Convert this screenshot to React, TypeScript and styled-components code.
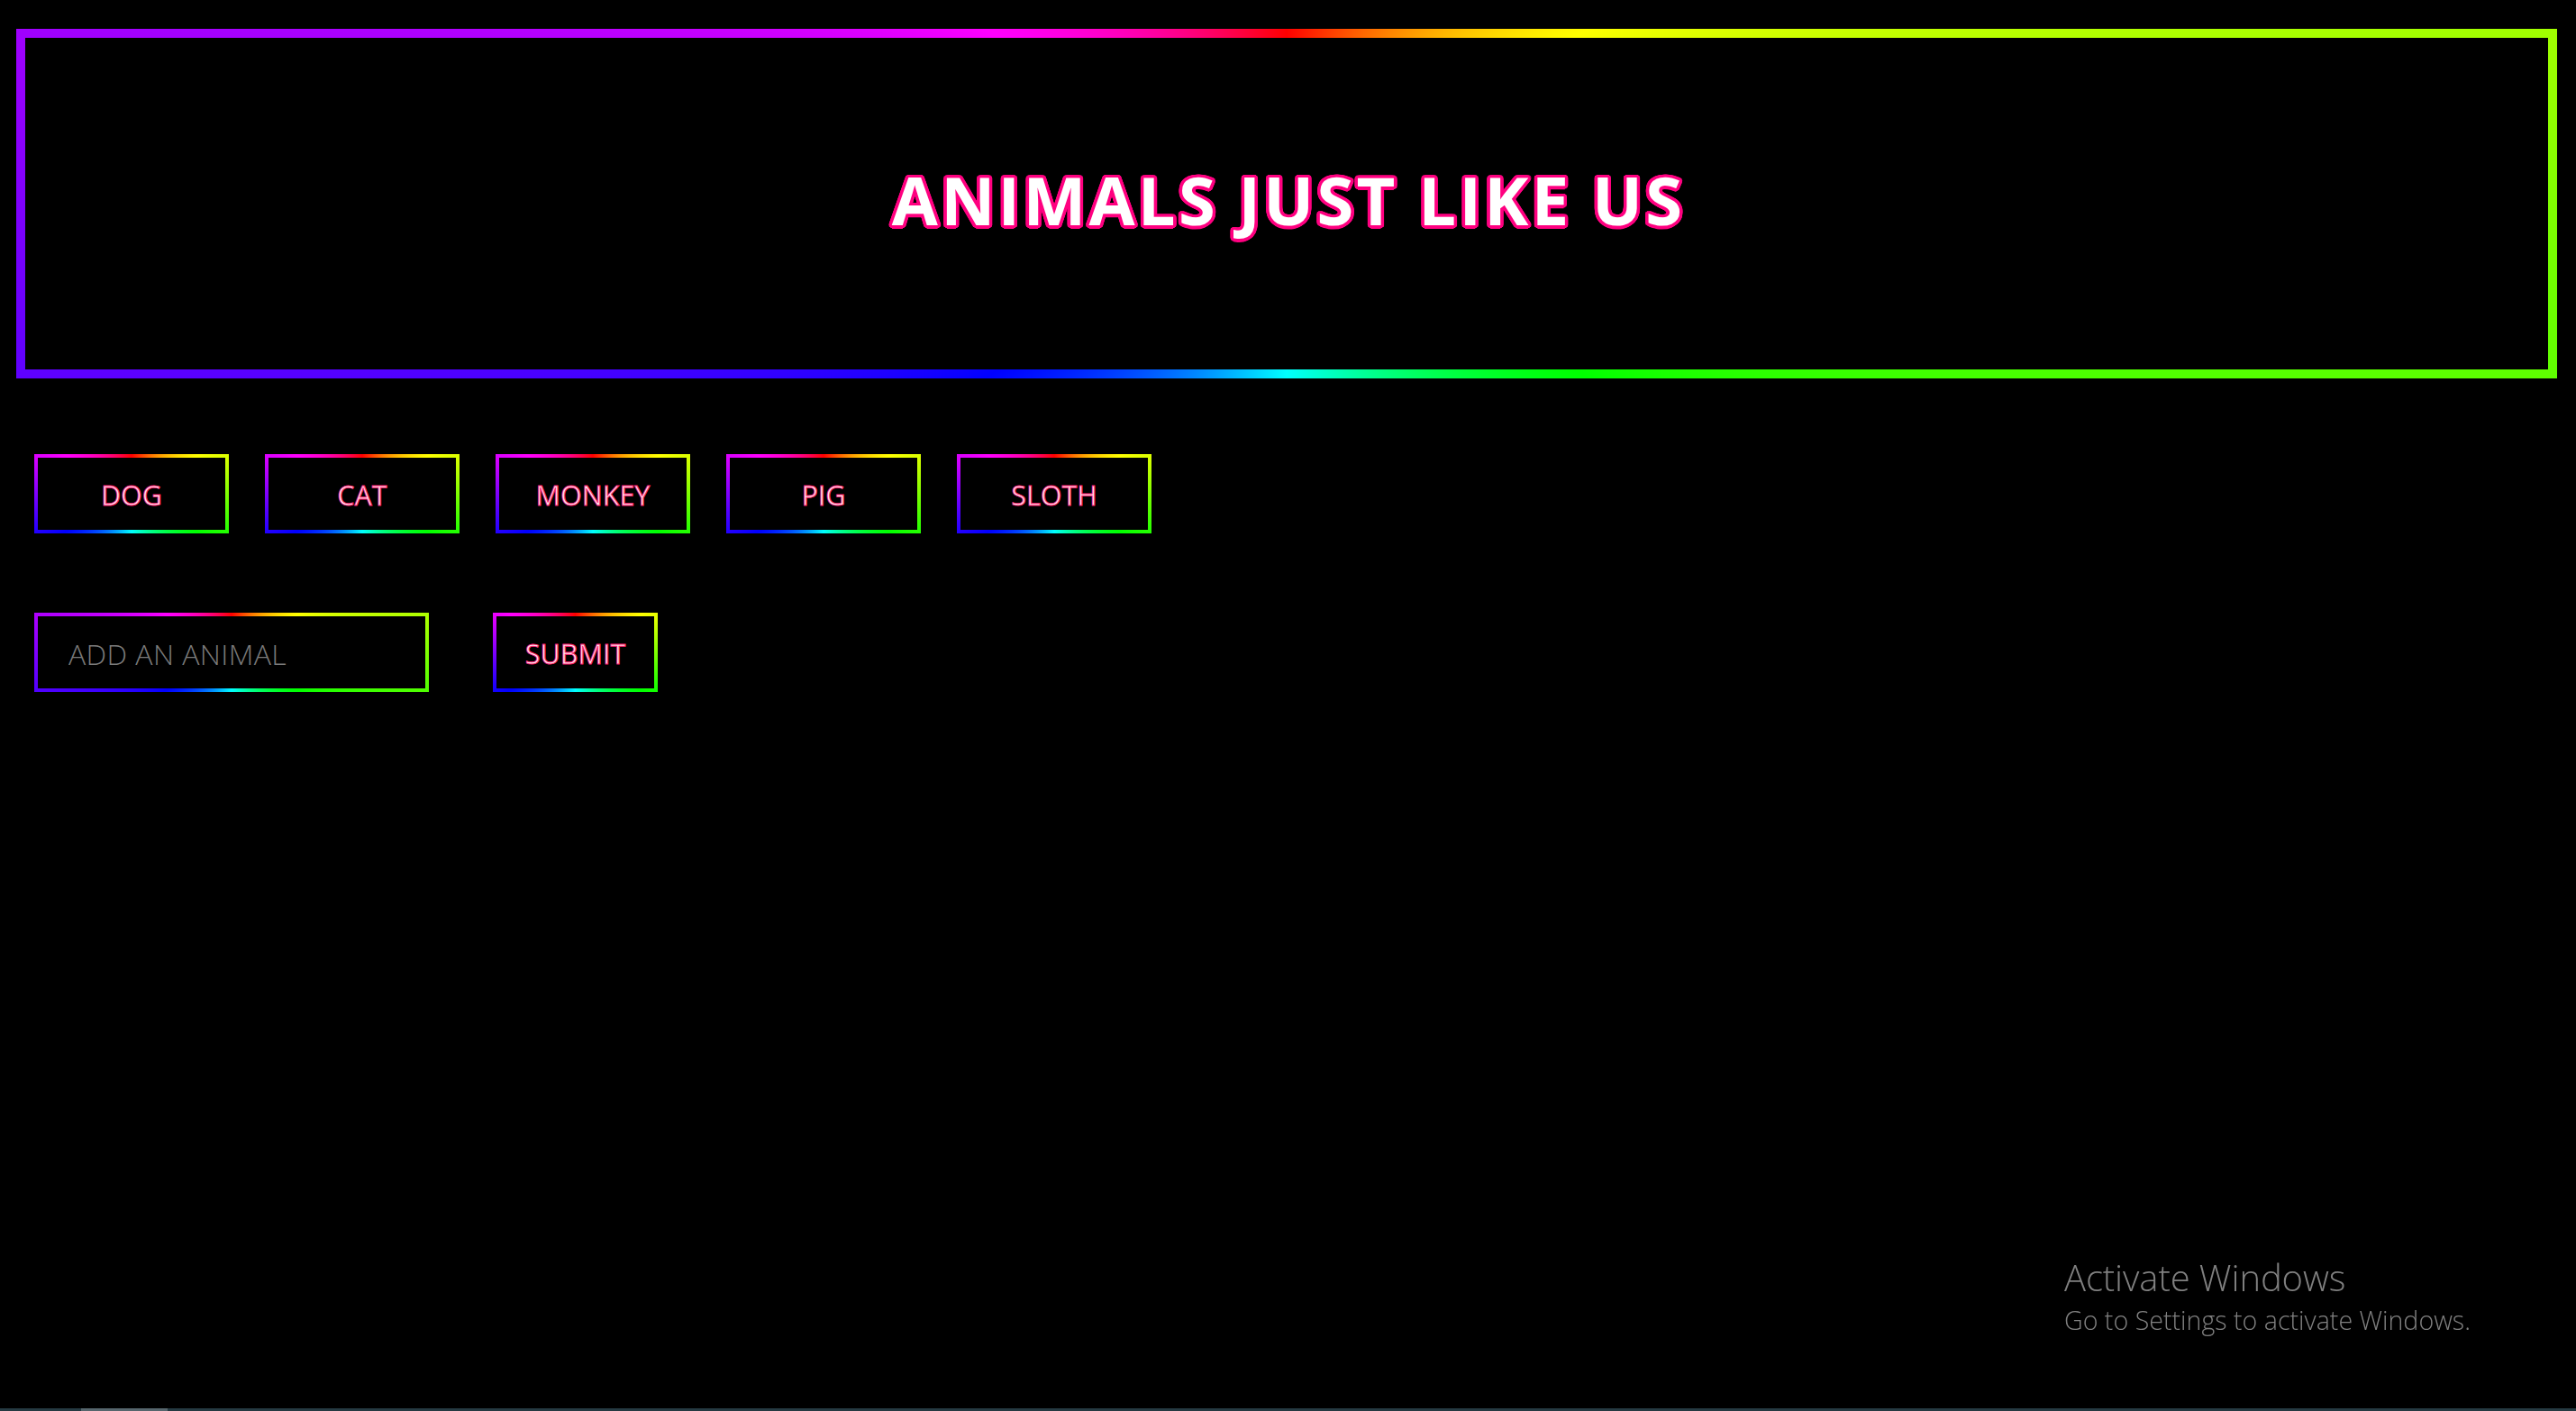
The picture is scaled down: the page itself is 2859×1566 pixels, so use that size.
import React from "react";
import styled, { createGlobalStyle } from "styled-components";

const hueWheel = "conic-gradient(red, yellow, lime, aqua, blue, magenta, red)";

const outline = (r: number, color: string) => {
  const parts: string[] = [];
  const steps = 24;
  for (let i = 0; i < steps; i++) {
    const a = (i / steps) * Math.PI * 2;
    parts.push(`${(Math.cos(a) * r).toFixed(2)}px ${(Math.sin(a) * r).toFixed(2)}px 0 ${color}`);
  }
  return parts.join(", ");
};

const titleShadow = outline(3.5, "#ff0080");

const GlobalStyle = createGlobalStyle`
  html, body {
    margin: 0;
    padding: 0;
    background: #000;
    height: 100%;
  }
  body {
    font-family: "Open Sans", "Noto Sans", sans-serif;
  }
  #root {
    min-height: 100%;
  }
`;

const Page = styled.div`
  min-height: 100vh;
  display: flex;
  flex-direction: column;
  background: #000;
  box-sizing: border-box;
`;

const Header = styled.header`
  margin: 32px 21px 0 18px;
  height: 388px;
  box-sizing: border-box;
  border: 10px solid transparent;
  border-image: ${hueWheel} 10;
  display: flex;
  align-items: center;
  justify-content: center;
`;

const Title = styled.h1`
  margin: 0;
  font-family: "Open Sans", "Noto Sans", sans-serif;
  font-weight: 700;
  font-size: 74px;
  letter-spacing: 3.3px;
  color: #fff;
  text-shadow: ${titleShadow};
  line-height: 1;
  transform: translate(2px, -4px);
`;

const AnimalRow = styled.div`
  display: flex;
  gap: 40px;
  margin-top: 84px;
  padding-left: 38px;
`;

const GradientButton = styled.button<{ $w: number }>`
  width: ${(p) => p.$w}px;
  height: 88px;
  box-sizing: border-box;
  background: #000;
  border: 4px solid transparent;
  border-image: ${hueWheel} 4;
  font-family: "Open Sans", "Noto Sans", sans-serif;
  font-size: 30.5px;
  font-weight: 400;
  color: #ffe0ec;
  -webkit-text-stroke: 0.9px #ff1a70;
  text-transform: uppercase;
  padding: 2px 0 0;
  cursor: pointer;
  display: flex;
  align-items: center;
  justify-content: center;
`;

const FormRow = styled.form`
  display: flex;
  gap: 71px;
  margin-top: 88px;
  padding-left: 38px;
`;

const AnimalInput = styled.input`
  width: 438px;
  height: 88px;
  box-sizing: border-box;
  background: #000;
  border: 4px solid transparent;
  border-image: ${hueWheel} 4;
  padding: 2px 0 0 34px;
  font-family: "Open Sans", "Noto Sans", sans-serif;
  font-size: 32px;
  font-weight: 300;
  letter-spacing: 0.4px;
  color: #ddd;
  outline: none;
  &::placeholder {
    color: #7a7a7a;
    opacity: 1;
  }
`;

const Spacer = styled.div`
  flex: 1;
`;

const BottomStrip = styled.div`
  height: 3px;
  background: #253a42;
  display: flex;
`;

const StripThumb = styled.div`
  margin-left: 90px;
  width: 96px;
  background: #56666d;
`;

const Watermark = styled.div`
  position: fixed;
  left: 2291px;
  top: 1398px;
  color: #808080;
  font-family: "Open Sans", "Noto Sans", sans-serif;
  font-weight: 300;
  pointer-events: none;
`;

const WatermarkTitle = styled.div`
  font-size: 40px;
  line-height: 40px;
  letter-spacing: -0.1px;
`;

const WatermarkText = styled.div`
  margin-top: 13px;
  font-size: 28.6px;
  line-height: 28px;
`;

const animals = ["DOG", "CAT", "MONKEY", "PIG", "SLOTH"];

export default function App() {
  return (
    <>
      <GlobalStyle />
      <Page>
        <Header>
          <Title>ANIMALS JUST LIKE US</Title>
        </Header>
        <AnimalRow>
          {animals.map((a) => (
            <GradientButton key={a} $w={216} type="button">
              {a}
            </GradientButton>
          ))}
        </AnimalRow>
        <FormRow onSubmit={(e) => e.preventDefault()}>
          <AnimalInput placeholder="ADD AN ANIMAL" />
          <GradientButton $w={183} type="submit">
            SUBMIT
          </GradientButton>
        </FormRow>
        <Spacer />
        <BottomStrip>
          <StripThumb />
        </BottomStrip>
      </Page>
      <Watermark>
        <WatermarkTitle>Activate Windows</WatermarkTitle>
        <WatermarkText>Go to Settings to activate Windows.</WatermarkText>
      </Watermark>
    </>
  );
}
